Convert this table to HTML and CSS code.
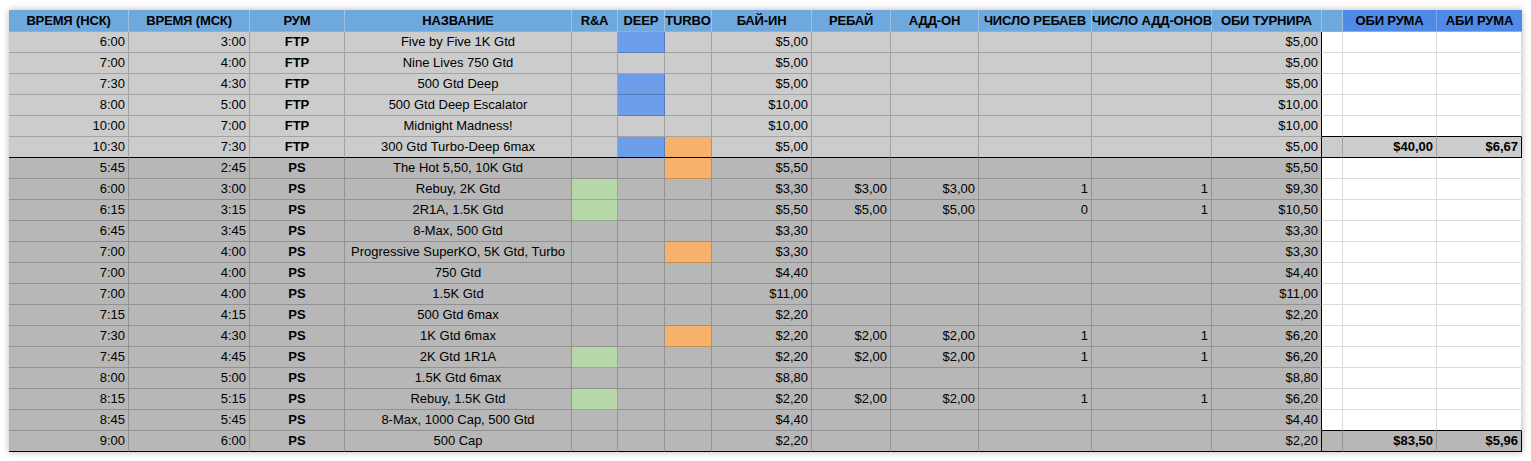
FILE: index.html
```html
<!DOCTYPE html>
<html lang="ru">
<head>
<meta charset="utf-8">
<title>Турниры</title>
<link rel="stylesheet" href="styles.css">
</head>
<body>
<div class="page">
<table class="sheet">
<colgroup>
<col class="c1"><col class="c2"><col class="c3"><col class="c4"><col class="c5"><col class="c6"><col class="c7"><col class="c8"><col class="c9"><col class="c10"><col class="c11"><col class="c12"><col class="c13"><col class="c14"><col class="c15"><col class="c16">
</colgroup>
<thead>
<tr>
<th>ВРЕМЯ (НСК)</th><th>ВРЕМЯ (МСК)</th><th>РУМ</th><th>НАЗВАНИЕ</th><th>R&amp;A</th><th>DEEP</th><th>TURBO</th><th>БАЙ-ИН</th><th>РЕБАЙ</th><th>АДД-ОН</th><th>ЧИСЛО РЕБАЕВ</th><th>ЧИСЛО АДД-ОНОВ</th><th>ОБИ ТУРНИРА</th><th class="gap"></th><th class="room">ОБИ РУМА</th><th class="room last">АБИ РУМА</th>
</tr>
</thead>
<tbody>
<tr class="ftp"><td class="r">6:00</td><td class="r">3:00</td><td class="b">FTP</td><td class="c">Five by Five 1K Gtd</td><td></td><td class="deep"></td><td></td><td class="r">$5,00</td><td></td><td></td><td></td><td></td><td class="r tot">$5,00</td><td class="w"></td><td class="w"></td><td class="w"></td></tr>
<tr class="ftp"><td class="r">7:00</td><td class="r">4:00</td><td class="b">FTP</td><td class="c">Nine Lives 750 Gtd</td><td></td><td></td><td></td><td class="r">$5,00</td><td></td><td></td><td></td><td></td><td class="r tot">$5,00</td><td class="w"></td><td class="w"></td><td class="w"></td></tr>
<tr class="ftp"><td class="r">7:30</td><td class="r">4:30</td><td class="b">FTP</td><td class="c">500 Gtd Deep</td><td></td><td class="deep"></td><td></td><td class="r">$5,00</td><td></td><td></td><td></td><td></td><td class="r tot">$5,00</td><td class="w"></td><td class="w"></td><td class="w"></td></tr>
<tr class="ftp"><td class="r">8:00</td><td class="r">5:00</td><td class="b">FTP</td><td class="c">500 Gtd Deep Escalator</td><td></td><td class="deep"></td><td></td><td class="r">$10,00</td><td></td><td></td><td></td><td></td><td class="r tot">$10,00</td><td class="w"></td><td class="w"></td><td class="w"></td></tr>
<tr class="ftp"><td class="r">10:00</td><td class="r">7:00</td><td class="b">FTP</td><td class="c">Midnight Madness!</td><td></td><td></td><td></td><td class="r">$10,00</td><td></td><td></td><td></td><td></td><td class="r tot">$10,00</td><td class="w above"></td><td class="w above"></td><td class="w above"></td></tr>
<tr class="ftp sep"><td class="r">10:30</td><td class="r">7:30</td><td class="b">FTP</td><td class="c">300 Gtd Turbo-Deep 6max</td><td></td><td class="deep"></td><td class="turbo"></td><td class="r">$5,00</td><td></td><td></td><td></td><td></td><td class="r tot">$5,00</td><td></td><td class="r b sum">$40,00</td><td class="r b sum end">$6,67</td></tr>
<tr class="ps"><td class="r">5:45</td><td class="r">2:45</td><td class="b">PS</td><td class="c">The Hot 5,50, 10K Gtd</td><td></td><td></td><td class="turbo"></td><td class="r">$5,50</td><td></td><td></td><td></td><td></td><td class="r tot">$5,50</td><td class="w"></td><td class="w"></td><td class="w"></td></tr>
<tr class="ps"><td class="r">6:00</td><td class="r">3:00</td><td class="b">PS</td><td class="c">Rebuy, 2K Gtd</td><td class="ra"></td><td></td><td></td><td class="r">$3,30</td><td class="r">$3,00</td><td class="r">$3,00</td><td class="r">1</td><td class="r">1</td><td class="r tot">$9,30</td><td class="w"></td><td class="w"></td><td class="w"></td></tr>
<tr class="ps"><td class="r">6:15</td><td class="r">3:15</td><td class="b">PS</td><td class="c">2R1A, 1.5K Gtd</td><td class="ra"></td><td></td><td></td><td class="r">$5,50</td><td class="r">$5,00</td><td class="r">$5,00</td><td class="r">0</td><td class="r">1</td><td class="r tot">$10,50</td><td class="w"></td><td class="w"></td><td class="w"></td></tr>
<tr class="ps"><td class="r">6:45</td><td class="r">3:45</td><td class="b">PS</td><td class="c">8-Max, 500 Gtd</td><td></td><td></td><td></td><td class="r">$3,30</td><td></td><td></td><td></td><td></td><td class="r tot">$3,30</td><td class="w"></td><td class="w"></td><td class="w"></td></tr>
<tr class="ps"><td class="r">7:00</td><td class="r">4:00</td><td class="b">PS</td><td class="c">Progressive SuperKO, 5K Gtd, Turbo</td><td></td><td></td><td class="turbo"></td><td class="r">$3,30</td><td></td><td></td><td></td><td></td><td class="r tot">$3,30</td><td class="w"></td><td class="w"></td><td class="w"></td></tr>
<tr class="ps"><td class="r">7:00</td><td class="r">4:00</td><td class="b">PS</td><td class="c">750 Gtd</td><td></td><td></td><td></td><td class="r">$4,40</td><td></td><td></td><td></td><td></td><td class="r tot">$4,40</td><td class="w"></td><td class="w"></td><td class="w"></td></tr>
<tr class="ps"><td class="r">7:00</td><td class="r">4:00</td><td class="b">PS</td><td class="c">1.5K Gtd</td><td></td><td></td><td></td><td class="r">$11,00</td><td></td><td></td><td></td><td></td><td class="r tot">$11,00</td><td class="w"></td><td class="w"></td><td class="w"></td></tr>
<tr class="ps"><td class="r">7:15</td><td class="r">4:15</td><td class="b">PS</td><td class="c">500 Gtd 6max</td><td></td><td></td><td></td><td class="r">$2,20</td><td></td><td></td><td></td><td></td><td class="r tot">$2,20</td><td class="w"></td><td class="w"></td><td class="w"></td></tr>
<tr class="ps"><td class="r">7:30</td><td class="r">4:30</td><td class="b">PS</td><td class="c">1K Gtd 6max</td><td></td><td></td><td class="turbo"></td><td class="r">$2,20</td><td class="r">$2,00</td><td class="r">$2,00</td><td class="r">1</td><td class="r">1</td><td class="r tot">$6,20</td><td class="w"></td><td class="w"></td><td class="w"></td></tr>
<tr class="ps"><td class="r">7:45</td><td class="r">4:45</td><td class="b">PS</td><td class="c">2K Gtd 1R1A</td><td class="ra"></td><td></td><td></td><td class="r">$2,20</td><td class="r">$2,00</td><td class="r">$2,00</td><td class="r">1</td><td class="r">1</td><td class="r tot">$6,20</td><td class="w"></td><td class="w"></td><td class="w"></td></tr>
<tr class="ps"><td class="r">8:00</td><td class="r">5:00</td><td class="b">PS</td><td class="c">1.5K Gtd 6max</td><td></td><td></td><td></td><td class="r">$8,80</td><td></td><td></td><td></td><td></td><td class="r tot">$8,80</td><td class="w"></td><td class="w"></td><td class="w"></td></tr>
<tr class="ps"><td class="r">8:15</td><td class="r">5:15</td><td class="b">PS</td><td class="c">Rebuy, 1.5K Gtd</td><td class="ra"></td><td></td><td></td><td class="r">$2,20</td><td class="r">$2,00</td><td class="r">$2,00</td><td class="r">1</td><td class="r">1</td><td class="r tot">$6,20</td><td class="w"></td><td class="w"></td><td class="w"></td></tr>
<tr class="ps"><td class="r">8:45</td><td class="r">5:45</td><td class="b">PS</td><td class="c">8-Max, 1000 Cap, 500 Gtd</td><td></td><td></td><td></td><td class="r">$4,40</td><td></td><td></td><td></td><td></td><td class="r tot">$4,40</td><td class="w above"></td><td class="w above"></td><td class="w above"></td></tr>
<tr class="ps sep"><td class="r">9:00</td><td class="r">6:00</td><td class="b">PS</td><td class="c">500 Cap</td><td></td><td></td><td></td><td class="r">$2,20</td><td></td><td></td><td></td><td></td><td class="r tot">$2,20</td><td></td><td class="r b sum">$83,50</td><td class="r b sum end">$5,96</td></tr>
</tbody>
</table>
</div>
</body>
</html>
```
FILE: styles.css
```css
html, body {
  margin: 0;
  padding: 0;
  background: #ffffff;
}

.page {
  padding: 10px 9px;
}

.sheet {
  table-layout: fixed;
  width: 1513px;
  border-collapse: separate;
  border-spacing: 0;
  font-family: "Liberation Sans", Arial, sans-serif;
  font-size: 13px;
  color: #000;
  box-shadow: 0 0 7px rgba(0, 0, 0, 0.28);
}

.c1 { width: 120px; }
.c2 { width: 121px; }
.c3 { width: 95px; }
.c4 { width: 227px; }
.c5 { width: 46px; }
.c6 { width: 47px; }
.c7 { width: 47px; }
.c8 { width: 100px; }
.c9 { width: 79px; }
.c10 { width: 88px; }
.c11 { width: 113px; }
.c12 { width: 120px; }
.c13 { width: 110px; }
.c14 { width: 21px; }
.c15 { width: 94px; }
.c16 { width: 85px; }

.sheet th {
  height: 21px;
  padding: 0;
  background: #6fa8dc;
  font-weight: bold;
  text-align: center;
  white-space: nowrap;
  overflow: visible;
  letter-spacing: -0.15px;
  border-right: 1px solid #9dc0e4;
  border-bottom: 1px solid #8fb0cf;
  line-height: 21px;
}

.sheet th.room {
  background: #4f8be6;
  border-right-color: #7aa6ec;
}

.sheet th.last {
  border-right: none;
}

.sheet td {
  height: 20px;
  padding: 0 3px;
  line-height: 20px;
  white-space: nowrap;
  overflow: hidden;
  border-right: 1px solid rgba(0, 0, 0, 0.2);
  border-bottom: 1px solid rgba(0, 0, 0, 0.2);
}

.ftp td { background: #cccccc; }
.ps td { background: #b7b7b7; }

.sheet td.r { text-align: right; }
.sheet td.c { text-align: center; }
.sheet td.b { font-weight: bold; text-align: center; }
.sheet td.r.b { text-align: right; }

.sheet td.deep { background: #6d9eeb; }
.sheet td.turbo { background: #f6b26b; }
.sheet td.ra { background: #b6d7a8; }

.sheet td.w {
  background: #ffffff;
  border-right-color: #dadada;
  border-bottom-color: #dadada;
}

.sheet td.tot {
  border-right: 1px solid #000;
}

.sheet td.above {
  border-bottom-color: #000;
}

.sheet tr.sep td {
  border-bottom: 1px solid #000;
}

.sheet td.end {
  border-right: 1px solid #000;
}
```
